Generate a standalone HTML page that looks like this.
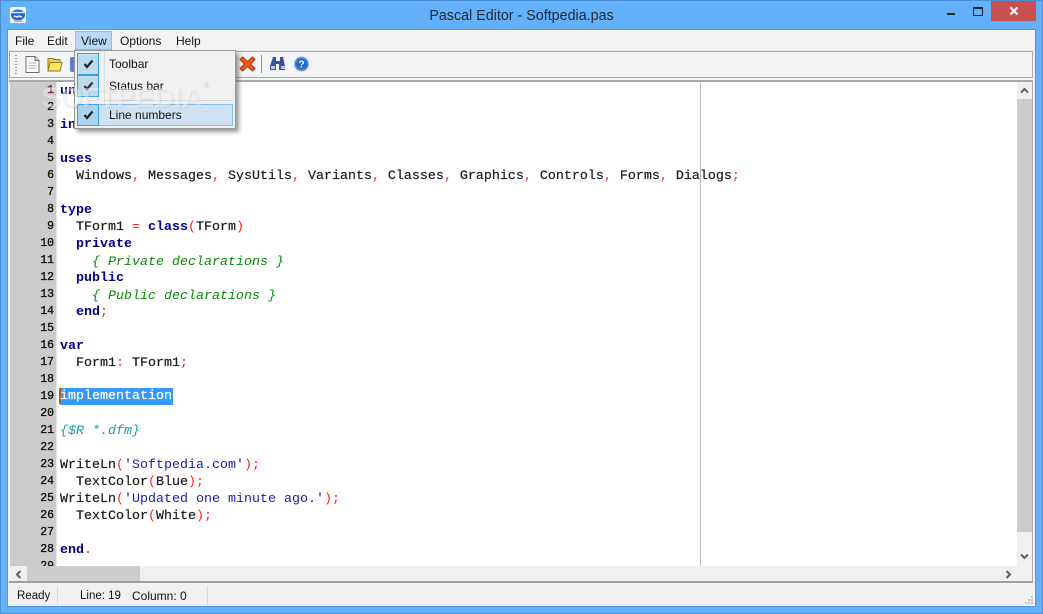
<!DOCTYPE html>
<html><head><meta charset="utf-8">
<style>
html,body{margin:0;padding:0}
body{width:1043px;height:614px;overflow:hidden;position:relative;background:#63b0fb;font-family:"Liberation Sans",sans-serif;font-size:12px;color:#000}
.a{position:absolute}
.t{position:absolute;white-space:pre}
#code{position:absolute;left:60px;top:83px;width:957px;height:483px;overflow:hidden}
.l{position:absolute;left:0;height:17px;font:13.33px/17px "Liberation Mono",monospace;white-space:pre;color:#1a1a1a;-webkit-text-stroke:.2px #1a1a1a}
.n{position:absolute;left:11px;width:43px;text-align:right;height:17px;font:11.5px/17px "Liberation Mono",monospace;color:#111;white-space:pre;-webkit-text-stroke:.35px #111}
.k{color:#00008b;font-weight:bold;-webkit-text-stroke:0}
.s{color:#ff2020;-webkit-text-stroke:0}
.q{color:#1a1ac0;-webkit-text-stroke:0}
.c{color:#0a8a0a;font-style:italic;-webkit-text-stroke:0}
.d{color:#1b9aa8;font-style:italic;-webkit-text-stroke:0}
.m{position:absolute;top:31px;height:20px;line-height:20px;font-size:12px;color:#111}
</style></head>
<body>
<div class="a" style="left:0;top:0;width:1043px;height:614px;box-sizing:border-box;border:1px solid #4a8fd6"></div>
<svg class="a" style="left:10px;top:7px" width="16" height="16" viewBox="0 0 16 16"><rect width="16" height="16" rx="2" fill="#f3f6fa"/><ellipse cx="8" cy="8" rx="7" ry="5.500" fill="#1f66d0"/><path d="M2 5.500h12" stroke="#cfe4fa" stroke-width="1.500"/><path d="M4 9l3 1 2-1 3 1" stroke="#e9f2fb" stroke-width="1.500" fill="none"/><path d="M4 14h8" stroke="#a9b8c8" stroke-width="2"/></svg>
<div class="t" style="left:0;top:6px;width:1043px;text-align:center;font-size:14.3px;line-height:20px;color:#1c2733">Pascal Editor - Softpedia.pas</div>
<div class="a" style="left:947px;top:13px;width:8px;height:2px;background:#222"></div>
<div class="a" style="left:973px;top:7px;width:8px;height:6px;border:1px solid #222;border-top:2px solid #222"></div>
<div class="a" style="left:991px;top:1px;width:45px;height:20px;background:#c75050"></div>
<svg class="a" style="left:1009px;top:6px" width="10" height="10" viewBox="0 0 10 10"><path d="M1.500 1.500l7 7M8.500 1.500l-7 7" stroke="#fff" stroke-width="2.200"/></svg>

<div class="a" style="left:8px;top:30px;width:1027px;height:576px;background:#f3f4f6;box-shadow:0 0 0 1px #4f97e0"></div>
<div class="a" style="left:8px;top:50px;width:1027px;height:1px;background:#e8e8e8"></div>
<div class="a" style="left:75px;top:31px;width:37px;height:19px;background:#b9d9f6;border:1px solid #8cbfec;box-sizing:border-box"></div>
<div class="m" style="left:15px">File</div>
<div class="m" style="left:47px">Edit</div>
<div class="m" style="left:81px">View</div>
<div class="m" style="left:120px">Options</div>
<div class="m" style="left:176px">Help</div>

<div class="a" style="left:9px;top:51px;width:1024px;height:27px;box-sizing:border-box;border:1px solid #a9a9a9;background:#f3f4f6"></div>
<div class="a" style="left:15px;top:55px;width:2px;height:20px;background:repeating-linear-gradient(#9a9a9a 0 1px,transparent 1px 3px)"></div>
<svg class="a" style="left:25px;top:56px" width="15" height="17" viewBox="0 0 15 17"><path d="M1 .5h9l4 4v12H1z" fill="#fdfdfd" stroke="#6b6b6b"/><path d="M10 .500v4h4" fill="#ddd" stroke="#6b6b6b"/><path d="M3.500 7h8M3.500 9.500h8M3.500 12h8" stroke="#b8b8b8"/></svg>
<svg class="a" style="left:47px;top:57px" width="16" height="15" viewBox="0 0 16 15"><path d="M1 1.500h5l1 1h6v4H3L1 13.500z" fill="#ecd24c" stroke="#8f7a20"/><path d="M3 5.500h12l-2 8.500H1z" fill="#fbe85f" stroke="#8f7a20"/></svg>
<div class="a" style="left:70px;top:57px;width:6px;height:15px;background:#5a84cf;border-radius:2px 0 0 2px"></div>
<svg class="a" style="left:239px;top:55px" width="17" height="18" viewBox="0 0 17 18"><path d="M3.500 2L8.500 6.500 13.500 2 16 4.500 11.500 9 16 13.500 13.500 16 8.500 11.500 3.500 16 1 13.500 5.500 9 1 4.500z" fill="#f2591a" stroke="#a8380c"/></svg>
<div class="a" style="left:261px;top:55px;width:1px;height:18px;background:#8f8f8f"></div>
<svg class="a" style="left:269px;top:56px" width="18" height="16" viewBox="0 0 18 16"><path d="M4 1h3v4h4V1h3l2 9v4h-6V8H7v6H1v-4z" fill="#3a558f"/><rect x="2" y="10" width="4" height="3" fill="#b9c9e6"/><rect x="12" y="10" width="4" height="3" fill="#b9c9e6"/></svg>
<svg class="a" style="left:294px;top:56px" width="15" height="16" viewBox="0 0 15 16"><circle cx="7.500" cy="8" r="7" fill="#3d7fd6" stroke="#7eaee6"/><circle cx="7.500" cy="8" r="5" fill="#2368c4"/><text x="7.500" y="11.500" font-family="Liberation Sans" font-size="10" font-weight="bold" text-anchor="middle" fill="#fff">?</text></svg>

<div class="a" style="left:9px;top:80px;width:1024px;height:503px;box-sizing:border-box;border-top:2px solid #a9a9ad;border-bottom:2px solid #a0a0a0;border-right:1px solid #a9a9a9;background:#fff"></div>
<div class="a" style="left:10px;top:82px;width:47px;height:484px;background:#cccccc;border-right:1px solid #e8e8e8;box-sizing:border-box"></div>
<div class="a" style="left:700px;top:82px;width:1px;height:484px;background:#b8b8b8"></div>
<div class="a" style="left:60px;top:388px;width:113px;height:17px;background:#3399ff"></div>
<div class="a" style="left:59px;top:388px;width:2px;height:16px;background:#b8620f"></div>

<div id="lines">
<div class="n" style="top:82px;color:#7a2a4a;-webkit-text-stroke:.35px #7a2a4a">1</div>
<div class="n" style="top:99px">2</div>
<div class="n" style="top:116px">3</div>
<div class="n" style="top:133px">4</div>
<div class="n" style="top:150px">5</div>
<div class="n" style="top:167px">6</div>
<div class="n" style="top:184px">7</div>
<div class="n" style="top:201px">8</div>
<div class="n" style="top:218px">9</div>
<div class="n" style="top:235px">10</div>
<div class="n" style="top:252px">11</div>
<div class="n" style="top:269px">12</div>
<div class="n" style="top:286px">13</div>
<div class="n" style="top:303px">14</div>
<div class="n" style="top:320px">15</div>
<div class="n" style="top:337px">16</div>
<div class="n" style="top:354px">17</div>
<div class="n" style="top:371px">18</div>
<div class="n" style="top:388px">19</div>
<div class="n" style="top:405px">20</div>
<div class="n" style="top:422px">21</div>
<div class="n" style="top:439px">22</div>
<div class="n" style="top:456px">23</div>
<div class="n" style="top:473px">24</div>
<div class="n" style="top:490px">25</div>
<div class="n" style="top:507px">26</div>
<div class="n" style="top:524px">27</div>
<div class="n" style="top:541px">28</div>
</div>
<div class="a" style="left:10px;top:558px;width:47px;height:8px;overflow:hidden"><div class="n" style="top:0;left:1px">29</div></div>

<div id="code">
<div class="l k" style="top:0">unit Unit1;</div>
<div class="l k" style="top:34px">interface</div>
<div class="l" style="top:68px"><span class="k">uses</span></div>
<div class="l" style="top:85px">  Windows<span class="s">,</span> Messages<span class="s">,</span> SysUtils<span class="s">,</span> Variants<span class="s">,</span> Classes<span class="s">,</span> Graphics<span class="s">,</span> Controls<span class="s">,</span> Forms<span class="s">,</span> Dialogs<span class="s">;</span></div>
<div class="l" style="top:119px"><span class="k">type</span></div>
<div class="l" style="top:136px">  TForm1 <span class="s">=</span> <span class="k">class</span><span class="s">(</span>TForm<span class="s">)</span></div>
<div class="l" style="top:153px">  <span class="k">private</span></div>
<div class="l c" style="top:171px">    { Private declarations }</div>
<div class="l" style="top:187px">  <span class="k">public</span></div>
<div class="l c" style="top:205px">    { Public declarations }</div>
<div class="l" style="top:221px">  <span class="k">end</span><span class="s">;</span></div>
<div class="l" style="top:255px"><span class="k">var</span></div>
<div class="l" style="top:272px">  Form1<span class="s">:</span> TForm1<span class="s">;</span></div>
<div class="l" style="top:305px;color:#fff;-webkit-text-stroke:.2px #fff">implementation</div>
<div class="l d" style="top:340px">{$R *.dfm}</div>
<div class="l" style="top:374px">WriteLn<span class="s">(</span><span class="q">'Softpedia.com'</span><span class="s">);</span></div>
<div class="l" style="top:391px">  TextColor<span class="s">(</span>Blue<span class="s">);</span></div>
<div class="l" style="top:408px">WriteLn<span class="s">(</span><span class="q">'Updated one minute ago.'</span><span class="s">);</span></div>
<div class="l" style="top:425px">  TextColor<span class="s">(</span>White<span class="s">);</span></div>
<div class="l" style="top:459px"><span class="k">end</span><span class="s">.</span></div>
</div>

<div class="a" style="left:1017px;top:82px;width:15px;height:484px;background:#f0f0f0"></div>
<div class="a" style="left:1017px;top:99px;width:15px;height:433px;background:#cdcdcd"></div>
<div class="a" style="left:10px;top:566px;width:1022px;height:15px;background:#f0f0f0"></div>
<div class="a" style="left:27px;top:566px;width:113px;height:15px;background:#cdcdcd"></div>
<svg class="a" style="left:1020px;top:87px" width="9" height="7" viewBox="0 0 9 7"><path d="M1 5.500l3.500-3.500 3.500 3.500" fill="none" stroke="#606060" stroke-width="2"/></svg>
<svg class="a" style="left:1020px;top:553px" width="9" height="7" viewBox="0 0 9 7"><path d="M1 1.500l3.500 3.500 3.500-3.500" fill="none" stroke="#606060" stroke-width="2"/></svg>
<svg class="a" style="left:15px;top:570px" width="7" height="9" viewBox="0 0 7 9"><path d="M5.500 1L2 4.500 5.500 8" fill="none" stroke="#606060" stroke-width="2"/></svg>
<svg class="a" style="left:1005px;top:570px" width="7" height="9" viewBox="0 0 7 9"><path d="M1.500 1L5 4.500 1.500 8" fill="none" stroke="#606060" stroke-width="2"/></svg>

<div class="a" style="left:9px;top:584px;width:1025px;height:22px;background:#f0f0f0"></div>
<div class="t" style="left:17px;top:589px;line-height:14px;color:#111;font-size:11.5px">Ready</div>
<div class="a" style="left:57px;top:586px;width:1px;height:19px;background:#d8d8d8"></div>
<div class="t" style="left:80px;top:589px;line-height:14px;color:#111;font-size:11.5px">Line: 19</div>
<div class="t" style="left:132px;top:589px;line-height:14px;color:#111">Column: 0</div>
<div class="a" style="left:207px;top:586px;width:1px;height:19px;background:#d8d8d8"></div>
<svg class="a" style="left:1024px;top:595px" width="10" height="10" viewBox="0 0 10 10" fill="#c4c4c4"><rect x="7" y="1" width="2" height="2"/><rect x="4" y="4" width="2" height="2"/><rect x="7" y="4" width="2" height="2"/><rect x="1" y="7" width="2" height="2"/><rect x="4" y="7" width="2" height="2"/><rect x="7" y="7" width="2" height="2"/></svg>

<div class="a" style="left:74px;top:50px;width:162px;height:79px;box-sizing:border-box;background:#f0f0f0;border:1px solid #979797;box-shadow:3px 3px 4px rgba(70,70,70,.55)"></div>
<div class="a" style="left:104px;top:52px;width:1px;height:75px;background:#dcdcdc"></div>
<div class="a" style="left:105px;top:100px;width:128px;height:1px;background:#d4d4d4"></div>
<div class="a" style="left:77px;top:104px;width:156px;height:22px;box-sizing:border-box;background:#cfe2f3;border:1px solid #80bdec"></div>
<div class="a" style="left:77px;top:53px;width:22px;height:22px;box-sizing:border-box;background:#bcdcec;border:1px solid #35a4e0"></div>
<div class="a" style="left:77px;top:75px;width:22px;height:22px;box-sizing:border-box;background:#bcdcec;border:1px solid #35a4e0"></div>
<div class="a" style="left:77px;top:104px;width:22px;height:22px;box-sizing:border-box;background:#a9d3ee;border:1px solid #35a4e0"></div>
<svg class="a" style="left:83px;top:59px" width="11" height="10" viewBox="0 0 11 10"><path d="M1.500 5l2.500 3L9.500 1.500" fill="none" stroke="#222" stroke-width="2.200"/></svg>
<svg class="a" style="left:83px;top:81px" width="11" height="10" viewBox="0 0 11 10"><path d="M1.500 5l2.500 3L9.500 1.500" fill="none" stroke="#333" stroke-width="2.200"/></svg>
<svg class="a" style="left:83px;top:110px" width="11" height="10" viewBox="0 0 11 10"><path d="M1.500 5l2.500 3L9.500 1.500" fill="none" stroke="#222" stroke-width="2.200"/></svg>
<div class="t" style="left:109px;top:57px;line-height:14px;color:#111">Toolbar</div>
<div class="t" style="left:109px;top:79px;line-height:14px;color:#111">Status bar</div>
<div class="t" style="left:109px;top:108px;line-height:14px;color:#111">Line numbers</div>

<div class="t" style="left:42px;top:84px;font-size:28px;line-height:28px;font-weight:bold;color:rgba(255,255,255,.4);text-shadow:1px 1px 1px rgba(120,120,120,.15)">SOFTPEDIA</div>
<div class="t" style="left:204px;top:81px;font-size:8px;line-height:10px;color:rgba(170,170,170,.5)">®</div>
</body></html>
